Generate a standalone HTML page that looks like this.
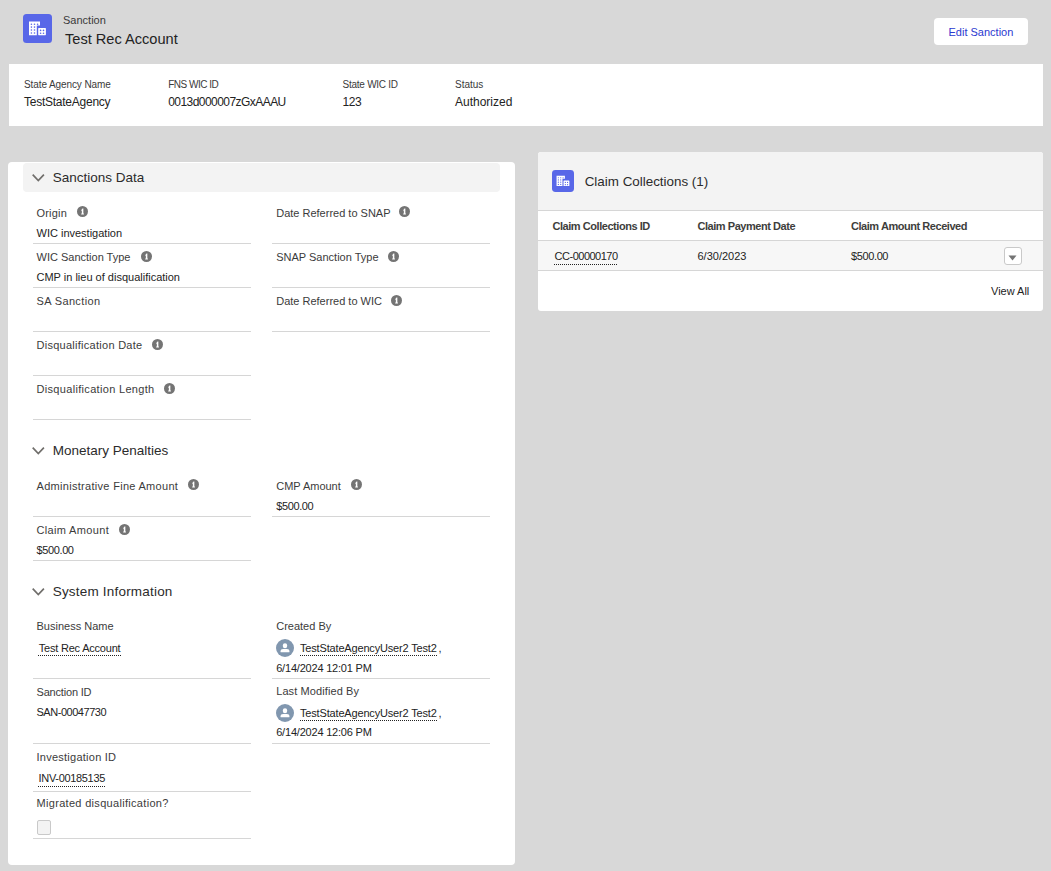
<!DOCTYPE html>
<html><head><meta charset="utf-8"><title>Sanction</title>
<style>
html,body{margin:0;padding:0;}
body{width:1051px;height:871px;background:#d8d8d8;position:relative;overflow:hidden;font-family:"Liberation Sans", sans-serif;}
</style></head><body>
<svg style="position:absolute;left:23px;top:14px" width="29" height="29" viewBox="0 0 29 29"><rect width="29" height="29" rx="3.5" fill="#5867e8"/><g fill="#fff"><path d="M6 7.6 H17 V11.4 H13.8 V21.2 H6 Z"/><rect x="15.2" y="14" width="7.7" height="7.2" rx="0.6"/></g><g fill="#5867e8"><circle cx="8.4" cy="10.2" r="0.8"/><circle cx="8.4" cy="13.1" r="0.8"/><circle cx="8.4" cy="16" r="0.8"/><circle cx="8.4" cy="19" r="0.8"/><circle cx="11.5" cy="10.2" r="0.8"/><circle cx="11.5" cy="13.1" r="0.8"/><circle cx="11.5" cy="16" r="0.8"/><circle cx="11.5" cy="19" r="0.8"/><circle cx="14.6" cy="10.2" r="0.8"/><circle cx="17.6" cy="16.4" r="0.8"/><circle cx="17.6" cy="19.3" r="0.8"/><circle cx="20.5" cy="16.4" r="0.8"/><circle cx="20.5" cy="19.3" r="0.8"/></g></svg>
<div style="position:absolute;left:63px;top:14.99px;font-size:11px;line-height:11px;color:#3b3b3b;font-weight:400;white-space:nowrap;">Sanction</div>
<div style="position:absolute;left:65px;top:31.84px;font-size:14.6px;line-height:14.6px;color:#232323;font-weight:400;white-space:nowrap;">Test Rec Account</div>
<div style="position:absolute;left:934px;top:18px;width:94px;height:27px;background:#fff;border-radius:4px;"></div>
<div style="position:absolute;left:948.5px;top:26.59px;font-size:11px;line-height:11px;color:#2b38d0;font-weight:400;white-space:nowrap;">Edit Sanction</div>
<div style="position:absolute;left:9px;top:64px;width:1034px;height:62px;background:#fff;"></div>
<div style="position:absolute;left:24px;top:79.53px;font-size:10px;line-height:10px;color:#3b3b3b;font-weight:400;white-space:nowrap;letter-spacing:-0.1px;">State Agency Name</div>
<div style="position:absolute;left:24px;top:95.84px;font-size:12px;line-height:12px;color:#232323;font-weight:400;white-space:nowrap;letter-spacing:-0.25px;">TestStateAgency</div>
<div style="position:absolute;left:168.2px;top:79.53px;font-size:10px;line-height:10px;color:#3b3b3b;font-weight:400;white-space:nowrap;letter-spacing:-0.5px;">FNS WIC ID</div>
<div style="position:absolute;left:168.2px;top:95.84px;font-size:12px;line-height:12px;color:#232323;font-weight:400;white-space:nowrap;letter-spacing:-0.55px;">0013d000007zGxAAAU</div>
<div style="position:absolute;left:342.5px;top:79.53px;font-size:10px;line-height:10px;color:#3b3b3b;font-weight:400;white-space:nowrap;letter-spacing:-0.25px;">State WIC ID</div>
<div style="position:absolute;left:342.5px;top:95.84px;font-size:12px;line-height:12px;color:#232323;font-weight:400;white-space:nowrap;letter-spacing:-0.4px;">123</div>
<div style="position:absolute;left:455px;top:79.53px;font-size:10px;line-height:10px;color:#3b3b3b;font-weight:400;white-space:nowrap;letter-spacing:0px;">Status</div>
<div style="position:absolute;left:455px;top:95.84px;font-size:12px;line-height:12px;color:#232323;font-weight:400;white-space:nowrap;letter-spacing:0px;">Authorized</div>
<div style="position:absolute;left:8px;top:162px;width:507px;height:703px;background:#fff;border-radius:4px;"></div>
<div style="position:absolute;left:23px;top:163px;width:477px;height:29px;background:#f3f3f3;border-radius:4px;"></div>
<svg style="position:absolute;left:32px;top:174.39999999999998px" width="13" height="8" viewBox="0 0 13 8"><path d="M0.7 0.7 L6.3 6.5 L11.9 0.7" fill="none" stroke="#706e6b" stroke-width="1.7"/></svg>
<div style="position:absolute;left:52.7px;top:170.87px;font-size:13.5px;line-height:13.5px;color:#2b2b2b;font-weight:400;white-space:nowrap;">Sanctions Data</div>
<div style="position:absolute;left:36.5px;top:207.69px;font-size:11px;line-height:11px;color:#3b3b3b;font-weight:400;white-space:nowrap;letter-spacing:0.2px;">Origin</div>
<svg style="position:absolute;left:76.80px;top:205.70px" width="11" height="11" viewBox="0 0 11 11"><circle cx="5.5" cy="5.5" r="5.5" fill="#747474"/><path d="M5.5 2.4 L6.35 2.4 L6.35 7.5 L6.9 7.5 L6.9 8.4 L4.2 8.4 L4.2 7.5 L4.85 7.5 L4.85 4.8 L4.3 4.8 L4.3 3.9 Z" fill="#fff"/></svg>
<div style="position:absolute;left:36.5px;top:227.69px;font-size:11px;line-height:11px;color:#232323;font-weight:400;white-space:nowrap;">WIC investigation</div>
<div style="position:absolute;left:33px;top:243px;width:218px;height:1px;background:#d6d6d6;"></div>
<div style="position:absolute;left:276.2px;top:207.69px;font-size:11px;line-height:11px;color:#3b3b3b;font-weight:400;white-space:nowrap;">Date Referred to SNAP</div>
<svg style="position:absolute;left:398.80px;top:205.70px" width="11" height="11" viewBox="0 0 11 11"><circle cx="5.5" cy="5.5" r="5.5" fill="#747474"/><path d="M5.5 2.4 L6.35 2.4 L6.35 7.5 L6.9 7.5 L6.9 8.4 L4.2 8.4 L4.2 7.5 L4.85 7.5 L4.85 4.8 L4.3 4.8 L4.3 3.9 Z" fill="#fff"/></svg>
<div style="position:absolute;left:272px;top:243px;width:218px;height:1px;background:#d6d6d6;"></div>
<div style="position:absolute;left:36.5px;top:251.69px;font-size:11px;line-height:11px;color:#3b3b3b;font-weight:400;white-space:nowrap;">WIC Sanction Type</div>
<svg style="position:absolute;left:140.80px;top:250.60px" width="11" height="11" viewBox="0 0 11 11"><circle cx="5.5" cy="5.5" r="5.5" fill="#747474"/><path d="M5.5 2.4 L6.35 2.4 L6.35 7.5 L6.9 7.5 L6.9 8.4 L4.2 8.4 L4.2 7.5 L4.85 7.5 L4.85 4.8 L4.3 4.8 L4.3 3.9 Z" fill="#fff"/></svg>
<div style="position:absolute;left:36.5px;top:271.69px;font-size:11px;line-height:11px;color:#232323;font-weight:400;white-space:nowrap;">CMP in lieu of disqualification</div>
<div style="position:absolute;left:33px;top:287px;width:218px;height:1px;background:#d6d6d6;"></div>
<div style="position:absolute;left:276.2px;top:251.69px;font-size:11px;line-height:11px;color:#3b3b3b;font-weight:400;white-space:nowrap;">SNAP Sanction Type</div>
<svg style="position:absolute;left:387.90px;top:250.70px" width="11" height="11" viewBox="0 0 11 11"><circle cx="5.5" cy="5.5" r="5.5" fill="#747474"/><path d="M5.5 2.4 L6.35 2.4 L6.35 7.5 L6.9 7.5 L6.9 8.4 L4.2 8.4 L4.2 7.5 L4.85 7.5 L4.85 4.8 L4.3 4.8 L4.3 3.9 Z" fill="#fff"/></svg>
<div style="position:absolute;left:272px;top:287px;width:218px;height:1px;background:#d6d6d6;"></div>
<div style="position:absolute;left:36.5px;top:295.69px;font-size:11px;line-height:11px;color:#3b3b3b;font-weight:400;white-space:nowrap;letter-spacing:0.36px;">SA Sanction</div>
<div style="position:absolute;left:33px;top:331px;width:218px;height:1px;background:#d6d6d6;"></div>
<div style="position:absolute;left:276.2px;top:295.69px;font-size:11px;line-height:11px;color:#3b3b3b;font-weight:400;white-space:nowrap;">Date Referred to WIC</div>
<svg style="position:absolute;left:390.80px;top:294.60px" width="11" height="11" viewBox="0 0 11 11"><circle cx="5.5" cy="5.5" r="5.5" fill="#747474"/><path d="M5.5 2.4 L6.35 2.4 L6.35 7.5 L6.9 7.5 L6.9 8.4 L4.2 8.4 L4.2 7.5 L4.85 7.5 L4.85 4.8 L4.3 4.8 L4.3 3.9 Z" fill="#fff"/></svg>
<div style="position:absolute;left:272px;top:331px;width:218px;height:1px;background:#d6d6d6;"></div>
<div style="position:absolute;left:36.5px;top:339.69px;font-size:11px;line-height:11px;color:#3b3b3b;font-weight:400;white-space:nowrap;letter-spacing:0.27px;">Disqualification Date</div>
<svg style="position:absolute;left:151.80px;top:338.60px" width="11" height="11" viewBox="0 0 11 11"><circle cx="5.5" cy="5.5" r="5.5" fill="#747474"/><path d="M5.5 2.4 L6.35 2.4 L6.35 7.5 L6.9 7.5 L6.9 8.4 L4.2 8.4 L4.2 7.5 L4.85 7.5 L4.85 4.8 L4.3 4.8 L4.3 3.9 Z" fill="#fff"/></svg>
<div style="position:absolute;left:33px;top:375px;width:218px;height:1px;background:#d6d6d6;"></div>
<div style="position:absolute;left:36.5px;top:383.69px;font-size:11px;line-height:11px;color:#3b3b3b;font-weight:400;white-space:nowrap;letter-spacing:0.32px;">Disqualification Length</div>
<svg style="position:absolute;left:163.80px;top:382.60px" width="11" height="11" viewBox="0 0 11 11"><circle cx="5.5" cy="5.5" r="5.5" fill="#747474"/><path d="M5.5 2.4 L6.35 2.4 L6.35 7.5 L6.9 7.5 L6.9 8.4 L4.2 8.4 L4.2 7.5 L4.85 7.5 L4.85 4.8 L4.3 4.8 L4.3 3.9 Z" fill="#fff"/></svg>
<div style="position:absolute;left:33px;top:419px;width:218px;height:1px;background:#d6d6d6;"></div>
<svg style="position:absolute;left:32px;top:447.2px" width="13" height="8" viewBox="0 0 13 8"><path d="M0.7 0.7 L6.3 6.5 L11.9 0.7" fill="none" stroke="#706e6b" stroke-width="1.7"/></svg>
<div style="position:absolute;left:52.7px;top:443.67px;font-size:13.5px;line-height:13.5px;color:#2b2b2b;font-weight:400;white-space:nowrap;">Monetary Penalties</div>
<div style="position:absolute;left:36.5px;top:480.69px;font-size:11px;line-height:11px;color:#3b3b3b;font-weight:400;white-space:nowrap;letter-spacing:0.3px;">Administrative Fine Amount</div>
<svg style="position:absolute;left:187.80px;top:478.70px" width="11" height="11" viewBox="0 0 11 11"><circle cx="5.5" cy="5.5" r="5.5" fill="#747474"/><path d="M5.5 2.4 L6.35 2.4 L6.35 7.5 L6.9 7.5 L6.9 8.4 L4.2 8.4 L4.2 7.5 L4.85 7.5 L4.85 4.8 L4.3 4.8 L4.3 3.9 Z" fill="#fff"/></svg>
<div style="position:absolute;left:33px;top:516px;width:218px;height:1px;background:#d6d6d6;"></div>
<div style="position:absolute;left:276.2px;top:480.69px;font-size:11px;line-height:11px;color:#3b3b3b;font-weight:400;white-space:nowrap;">CMP Amount</div>
<svg style="position:absolute;left:351.00px;top:478.80px" width="11" height="11" viewBox="0 0 11 11"><circle cx="5.5" cy="5.5" r="5.5" fill="#747474"/><path d="M5.5 2.4 L6.35 2.4 L6.35 7.5 L6.9 7.5 L6.9 8.4 L4.2 8.4 L4.2 7.5 L4.85 7.5 L4.85 4.8 L4.3 4.8 L4.3 3.9 Z" fill="#fff"/></svg>
<div style="position:absolute;left:276.2px;top:500.69px;font-size:11px;line-height:11px;color:#232323;font-weight:400;white-space:nowrap;letter-spacing:-0.38px;">$500.00</div>
<div style="position:absolute;left:272px;top:516px;width:218px;height:1px;background:#d6d6d6;"></div>
<div style="position:absolute;left:36.5px;top:524.69px;font-size:11px;line-height:11px;color:#3b3b3b;font-weight:400;white-space:nowrap;letter-spacing:0.34px;">Claim Amount</div>
<svg style="position:absolute;left:118.80px;top:523.60px" width="11" height="11" viewBox="0 0 11 11"><circle cx="5.5" cy="5.5" r="5.5" fill="#747474"/><path d="M5.5 2.4 L6.35 2.4 L6.35 7.5 L6.9 7.5 L6.9 8.4 L4.2 8.4 L4.2 7.5 L4.85 7.5 L4.85 4.8 L4.3 4.8 L4.3 3.9 Z" fill="#fff"/></svg>
<div style="position:absolute;left:36.5px;top:544.69px;font-size:11px;line-height:11px;color:#232323;font-weight:400;white-space:nowrap;letter-spacing:-0.38px;">$500.00</div>
<div style="position:absolute;left:33px;top:560px;width:218px;height:1px;background:#d6d6d6;"></div>
<svg style="position:absolute;left:32px;top:588.2px" width="13" height="8" viewBox="0 0 13 8"><path d="M0.7 0.7 L6.3 6.5 L11.9 0.7" fill="none" stroke="#706e6b" stroke-width="1.7"/></svg>
<div style="position:absolute;left:52.7px;top:584.67px;font-size:13.5px;line-height:13.5px;color:#2b2b2b;font-weight:400;white-space:nowrap;letter-spacing:0.2px;">System Information</div>
<div style="position:absolute;left:36.5px;top:620.69px;font-size:11px;line-height:11px;color:#3b3b3b;font-weight:400;white-space:nowrap;">Business Name</div>
<div style="position:absolute;left:38.7px;top:642.69px;font-size:11px;line-height:11px;color:#232323;font-weight:400;white-space:nowrap;letter-spacing:-0.2px;">Test Rec Account</div>
<div style="position:absolute;left:38px;top:655px;width:83px;height:1px;background:repeating-linear-gradient(90deg,#222 0 1px,transparent 1px 2px)"></div>
<div style="position:absolute;left:33px;top:678px;width:218px;height:1px;background:#d6d6d6;"></div>
<div style="position:absolute;left:276.2px;top:620.69px;font-size:11px;line-height:11px;color:#3b3b3b;font-weight:400;white-space:nowrap;">Created By</div>
<svg style="position:absolute;left:276px;top:639px" width="18" height="18" viewBox="0 0 18 18"><circle cx="9" cy="9" r="9" fill="#8197af"/><rect x="6.8" y="4.3" width="4.4" height="4.9" rx="2.2" fill="#fff"/><path d="M4.6 13.3 V12.2 Q4.6 9.9 7.2 9.9 H10.8 Q13.4 9.9 13.4 12.2 V13.3 Z" fill="#fff"/></svg>
<div style="position:absolute;left:300px;top:642.69px;font-size:11px;line-height:11px;color:#232323;font-weight:400;white-space:nowrap;letter-spacing:-0.17px;">TestStateAgencyUser2 Test2</div>
<div style="position:absolute;left:300px;top:655px;width:137px;height:1px;background:repeating-linear-gradient(90deg,#222 0 1px,transparent 1px 2px)"></div>
<div style="position:absolute;left:438.5px;top:642.69px;font-size:11px;line-height:11px;color:#232323;font-weight:400;white-space:nowrap;">,</div>
<div style="position:absolute;left:276.2px;top:662.69px;font-size:11px;line-height:11px;color:#232323;font-weight:400;white-space:nowrap;letter-spacing:-0.2px;">6/14/2024 12:01 PM</div>
<div style="position:absolute;left:272px;top:678px;width:218px;height:1px;background:#d6d6d6;"></div>
<div style="position:absolute;left:36.5px;top:686.69px;font-size:11px;line-height:11px;color:#3b3b3b;font-weight:400;white-space:nowrap;letter-spacing:-0.18px;">Sanction ID</div>
<div style="position:absolute;left:36.5px;top:706.69px;font-size:11px;line-height:11px;color:#232323;font-weight:400;white-space:nowrap;letter-spacing:-0.47px;">SAN-00047730</div>
<div style="position:absolute;left:33px;top:743px;width:218px;height:1px;background:#d6d6d6;"></div>
<div style="position:absolute;left:276.2px;top:686.19px;font-size:11px;line-height:11px;color:#3b3b3b;font-weight:400;white-space:nowrap;letter-spacing:0.1px;">Last Modified By</div>
<svg style="position:absolute;left:276px;top:704px" width="18" height="18" viewBox="0 0 18 18"><circle cx="9" cy="9" r="9" fill="#8197af"/><rect x="6.8" y="4.3" width="4.4" height="4.9" rx="2.2" fill="#fff"/><path d="M4.6 13.3 V12.2 Q4.6 9.9 7.2 9.9 H10.8 Q13.4 9.9 13.4 12.2 V13.3 Z" fill="#fff"/></svg>
<div style="position:absolute;left:300px;top:707.69px;font-size:11px;line-height:11px;color:#232323;font-weight:400;white-space:nowrap;letter-spacing:-0.17px;">TestStateAgencyUser2 Test2</div>
<div style="position:absolute;left:300px;top:720px;width:137px;height:1px;background:repeating-linear-gradient(90deg,#222 0 1px,transparent 1px 2px)"></div>
<div style="position:absolute;left:438.5px;top:707.69px;font-size:11px;line-height:11px;color:#232323;font-weight:400;white-space:nowrap;">,</div>
<div style="position:absolute;left:276.2px;top:727.19px;font-size:11px;line-height:11px;color:#232323;font-weight:400;white-space:nowrap;letter-spacing:-0.2px;">6/14/2024 12:06 PM</div>
<div style="position:absolute;left:272px;top:743px;width:218px;height:1px;background:#d6d6d6;"></div>
<div style="position:absolute;left:36.5px;top:751.69px;font-size:11px;line-height:11px;color:#3b3b3b;font-weight:400;white-space:nowrap;letter-spacing:0.25px;">Investigation ID</div>
<div style="position:absolute;left:38.6px;top:772.99px;font-size:11px;line-height:11px;color:#232323;font-weight:400;white-space:nowrap;letter-spacing:-0.33px;">INV-00185135</div>
<div style="position:absolute;left:38px;top:786px;width:67px;height:1px;background:repeating-linear-gradient(90deg,#222 0 1px,transparent 1px 2px)"></div>
<div style="position:absolute;left:33px;top:791px;width:218px;height:1px;background:#d6d6d6;"></div>
<div style="position:absolute;left:36.5px;top:798.49px;font-size:11px;line-height:11px;color:#3b3b3b;font-weight:400;white-space:nowrap;letter-spacing:0.31px;">Migrated disqualification?</div>
<div style="position:absolute;left:37px;top:820px;width:14px;height:15px;background:#f3f3f3;box-sizing:border-box;border:1px solid #c9c9c9;border-radius:2px;"></div>
<div style="position:absolute;left:33px;top:838px;width:218px;height:1px;background:#d6d6d6;"></div>
<div style="position:absolute;left:538px;top:152px;width:505px;height:159px;background:#fff;border-radius:3px;overflow:hidden;"></div>
<div style="position:absolute;left:538px;top:152px;width:505px;height:58px;background:#f3f3f3;border-radius:3px 3px 0 0;"></div>
<div style="position:absolute;left:538px;top:210px;width:505px;height:1px;background:#d6d6d6;"></div>
<svg style="position:absolute;left:552px;top:170px" width="22" height="22" viewBox="0 0 29 29"><rect width="29" height="29" rx="4.6" fill="#5867e8"/><g fill="#fff"><path d="M6 7.6 H17 V11.4 H13.8 V21.2 H6 Z"/><rect x="15.2" y="14" width="7.7" height="7.2" rx="0.6"/></g><g fill="#5867e8"><circle cx="8.4" cy="10.2" r="0.8"/><circle cx="8.4" cy="13.1" r="0.8"/><circle cx="8.4" cy="16" r="0.8"/><circle cx="8.4" cy="19" r="0.8"/><circle cx="11.5" cy="10.2" r="0.8"/><circle cx="11.5" cy="13.1" r="0.8"/><circle cx="11.5" cy="16" r="0.8"/><circle cx="11.5" cy="19" r="0.8"/><circle cx="14.6" cy="10.2" r="0.8"/><circle cx="17.6" cy="16.4" r="0.8"/><circle cx="17.6" cy="19.3" r="0.8"/><circle cx="20.5" cy="16.4" r="0.8"/><circle cx="20.5" cy="19.3" r="0.8"/></g></svg>
<div style="position:absolute;left:584.7px;top:174.66px;font-size:13.4px;line-height:13.4px;color:#2b2b2b;font-weight:400;white-space:nowrap;">Claim Collections (1)</div>
<div style="position:absolute;left:552.5px;top:220.99px;font-size:11px;line-height:11px;color:#3e3e3c;font-weight:700;white-space:nowrap;letter-spacing:-0.45px;">Claim Collections ID</div>
<div style="position:absolute;left:697.5px;top:220.99px;font-size:11px;line-height:11px;color:#3e3e3c;font-weight:700;white-space:nowrap;letter-spacing:-0.45px;">Claim Payment Date</div>
<div style="position:absolute;left:851px;top:220.99px;font-size:11px;line-height:11px;color:#3e3e3c;font-weight:700;white-space:nowrap;letter-spacing:-0.45px;">Claim Amount Received</div>
<div style="position:absolute;left:538px;top:240px;width:505px;height:1px;background:#d6d6d6;"></div>
<div style="position:absolute;left:538px;top:241px;width:505px;height:29px;background:#f7f7f7;"></div>
<div style="position:absolute;left:538px;top:270px;width:505px;height:1px;background:#d6d6d6;"></div>
<div style="position:absolute;left:554.6px;top:250.69px;font-size:11px;line-height:11px;color:#232323;font-weight:400;white-space:nowrap;letter-spacing:-0.5px;">CC-00000170</div>
<div style="position:absolute;left:554px;top:264px;width:63px;height:1px;background:repeating-linear-gradient(90deg,#222 0 1px,transparent 1px 2px)"></div>
<div style="position:absolute;left:697.5px;top:250.69px;font-size:11px;line-height:11px;color:#232323;font-weight:400;white-space:nowrap;">6/30/2023</div>
<div style="position:absolute;left:851px;top:250.69px;font-size:11px;line-height:11px;color:#232323;font-weight:400;white-space:nowrap;letter-spacing:-0.38px;">$500.00</div>
<div style="position:absolute;left:1004px;top:247px;width:18px;height:18px;background:#fff;box-sizing:border-box;border:1px solid #c9c9c9;border-radius:3px;"></div>
<svg style="position:absolute;left:1008px;top:255px" width="9" height="6" viewBox="0 0 9 6"><path d="M0.5 0.5 H8.5 L4.5 5.5 Z" fill="#747474"/></svg>
<div style="position:absolute;left:991px;top:285.99px;font-size:11px;line-height:11px;color:#232323;font-weight:400;white-space:nowrap;">View All</div>
</body></html>
